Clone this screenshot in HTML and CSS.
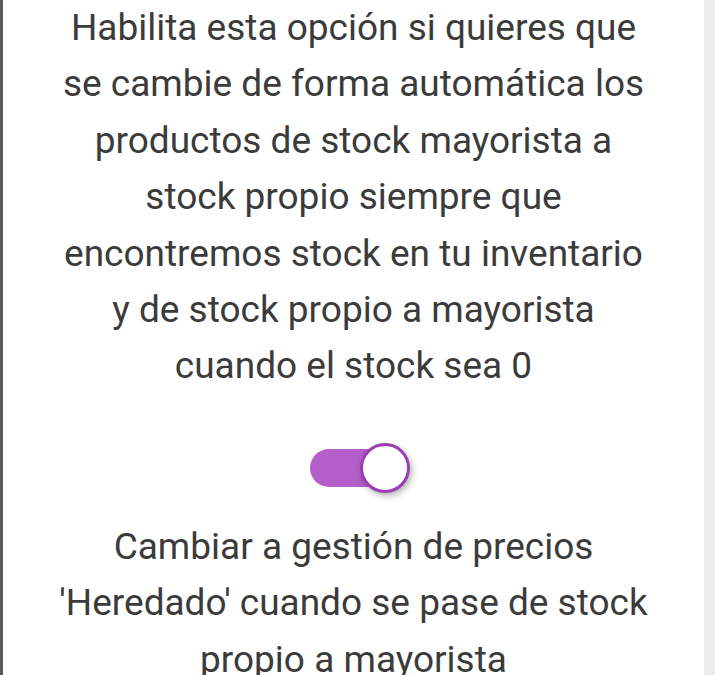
FILE: index.html
```html
<!DOCTYPE html>
<html lang="es">
<head>
  <meta charset="UTF-8">
  <meta name="viewport" content="width=device-width, initial-scale=1">
  <title>Configuración de stock</title>
  <link rel="stylesheet" href="styles.css">
</head>
<body>
  <div class="screen">
    <main class="panel">
      <p class="option-text">
        Habilita esta opción si quieres que<br>
        se cambie de forma automática los<br>
        productos de stock mayorista a<br>
        stock propio siempre que<br>
        encontremos stock en tu inventario<br>
        y de stock propio a mayorista<br>
        cuando el stock sea 0
      </p>

      <div class="toggle-row">
        <label class="switch">
          <input type="checkbox" checked>
          <span class="track"></span>
          <span class="knob"></span>
        </label>
      </div>

      <p class="option-text">
        Cambiar a gestión de precios<br>
        'Heredado' cuando se pase de stock<br>
        propio a mayorista
      </p>
    </main>
    <aside class="side-strip"></aside>
  </div>
</body>
</html>
```

FILE: styles.css
```css
* { margin: 0; padding: 0; box-sizing: border-box; }

body {
  background-color: #fff;
  color: #3b3b3b;
  font-family: Roboto, 'Noto Sans', sans-serif;
  overflow: hidden;
}

.screen {
  display: flex;
  height: 675px;
  border-left: 3px solid #5a5a5a;
}

.panel {
  flex: 1;
  background-color: #fff;
}

.side-strip {
  width: 11px;
  background-color: #ececec;
}

.option-text {
  font-size: 37px;
  line-height: 56.4px;
  text-align: center;
  white-space: nowrap;
}

.toggle-row {
  display: flex;
  justify-content: center;
  padding: 48px 0 26px;
}

.switch {
  position: relative;
  display: block;
  width: 100px;
  height: 50px;
  margin-left: 12px;
}

.switch input {
  display: none;
}

.track {
  position: absolute;
  left: 0;
  top: 6px;
  width: 80px;
  height: 38px;
  border-radius: 19px;
  background-color: #b35ec9;
}

.knob {
  position: absolute;
  left: 50px;
  top: 0;
  width: 50px;
  height: 50px;
  border-radius: 50%;
  background-color: #fff;
  border: 3px solid #9a3fb3;
  box-shadow: 2px 3px 6px rgba(0, 0, 0, 0.3);
}
```
